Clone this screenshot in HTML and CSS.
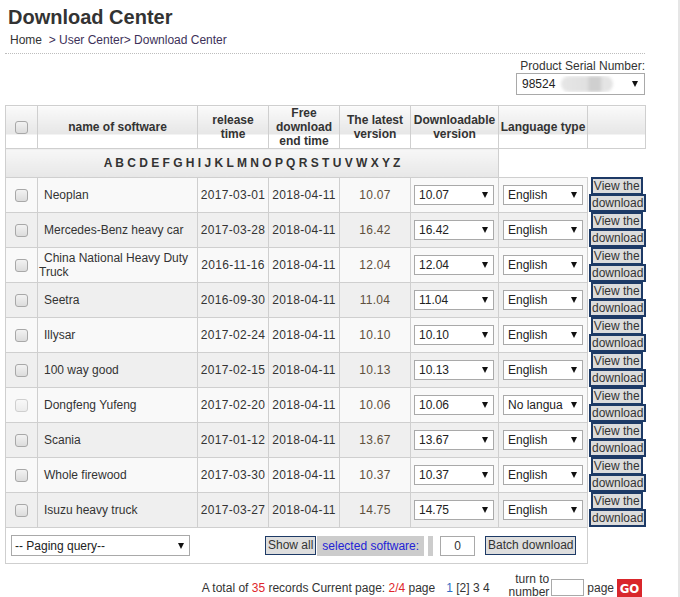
FILE: index.html
```html
<!DOCTYPE html>
<html lang="en">
<head>
<meta charset="utf-8">
<title>Download Center</title>
<link rel="stylesheet" href="styles.css">
</head>
<body>
<div class="page">
  <h1 class="title">Download Center</h1>
  <div class="crumb"><a class="home">Home</a> &nbsp;<span class="path">&gt; User Center&gt; Download Center</span></div>
  <div class="rule"></div>
  <div class="serial">
    <div class="serial-label">Product Serial Number:</div>
    <div class="sel sel-serial"><span class="val">98524<span class="blur"></span></span><i class="arr"></i></div>
  </div>

  <table class="grid">
    <colgroup>
      <col class="c1"><col class="c2"><col class="c3"><col class="c4"><col class="c5"><col class="c6"><col class="c7"><col class="c8">
    </colgroup>
    <thead>
      <tr class="head">
        <th><span class="cb"></span></th>
        <th>name of software</th>
        <th>release<br>time</th>
        <th>Free<br>download<br>end time</th>
        <th>The latest<br>version</th>
        <th>Downloadable<br>version</th>
        <th>Language type</th>
        <th></th>
      </tr>
    </thead>
    <tbody>
      <tr class="letters">
        <td colspan="6">A B C D E F G H I J K L M N O P Q R S T U V W X Y Z</td>
        <td colspan="2" class="blank"></td>
      </tr>
      <tr class="row odd">
        <td class="ck"><span class="cb"></span></td><td class="name">Neoplan</td>
        <td class="num">2017-03-01</td><td class="num">2018-04-11</td><td class="num ver">10.07</td>
        <td><div class="sel sel-ver"><span class="val">10.07</span><i class="arr"></i></div></td>
        <td><div class="sel sel-lang"><span class="val">English</span><i class="arr"></i></div></td>
        <td class="act"><a class="dl">View the download</a></td>
      </tr>
      <tr class="row even">
        <td class="ck"><span class="cb"></span></td><td class="name">Mercedes-Benz heavy car</td>
        <td class="num">2017-03-28</td><td class="num">2018-04-11</td><td class="num ver">16.42</td>
        <td><div class="sel sel-ver"><span class="val">16.42</span><i class="arr"></i></div></td>
        <td><div class="sel sel-lang"><span class="val">English</span><i class="arr"></i></div></td>
        <td class="act"><a class="dl">View the download</a></td>
      </tr>
      <tr class="row odd">
        <td class="ck"><span class="cb"></span></td><td class="name">China National Heavy Duty Truck</td>
        <td class="num">2016-11-16</td><td class="num">2018-04-11</td><td class="num ver">12.04</td>
        <td><div class="sel sel-ver"><span class="val">12.04</span><i class="arr"></i></div></td>
        <td><div class="sel sel-lang"><span class="val">English</span><i class="arr"></i></div></td>
        <td class="act"><a class="dl">View the download</a></td>
      </tr>
      <tr class="row even">
        <td class="ck"><span class="cb"></span></td><td class="name">Seetra</td>
        <td class="num">2016-09-30</td><td class="num">2018-04-11</td><td class="num ver">11.04</td>
        <td><div class="sel sel-ver"><span class="val">11.04</span><i class="arr"></i></div></td>
        <td><div class="sel sel-lang"><span class="val">English</span><i class="arr"></i></div></td>
        <td class="act"><a class="dl">View the download</a></td>
      </tr>
      <tr class="row odd">
        <td class="ck"><span class="cb"></span></td><td class="name">Illysar</td>
        <td class="num">2017-02-24</td><td class="num">2018-04-11</td><td class="num ver">10.10</td>
        <td><div class="sel sel-ver"><span class="val">10.10</span><i class="arr"></i></div></td>
        <td><div class="sel sel-lang"><span class="val">English</span><i class="arr"></i></div></td>
        <td class="act"><a class="dl">View the download</a></td>
      </tr>
      <tr class="row even">
        <td class="ck"><span class="cb"></span></td><td class="name">100 way good</td>
        <td class="num">2017-02-15</td><td class="num">2018-04-11</td><td class="num ver">10.13</td>
        <td><div class="sel sel-ver"><span class="val">10.13</span><i class="arr"></i></div></td>
        <td><div class="sel sel-lang"><span class="val">English</span><i class="arr"></i></div></td>
        <td class="act"><a class="dl">View the download</a></td>
      </tr>
      <tr class="row odd">
        <td class="ck"><span class="cb cb-off"></span></td><td class="name">Dongfeng Yufeng</td>
        <td class="num">2017-02-20</td><td class="num">2018-04-11</td><td class="num ver">10.06</td>
        <td><div class="sel sel-ver"><span class="val">10.06</span><i class="arr"></i></div></td>
        <td><div class="sel sel-lang"><span class="val">No langua</span><i class="arr"></i></div></td>
        <td class="act"><a class="dl">View the download</a></td>
      </tr>
      <tr class="row even">
        <td class="ck"><span class="cb"></span></td><td class="name">Scania</td>
        <td class="num">2017-01-12</td><td class="num">2018-04-11</td><td class="num ver">13.67</td>
        <td><div class="sel sel-ver"><span class="val">13.67</span><i class="arr"></i></div></td>
        <td><div class="sel sel-lang"><span class="val">English</span><i class="arr"></i></div></td>
        <td class="act"><a class="dl">View the download</a></td>
      </tr>
      <tr class="row odd">
        <td class="ck"><span class="cb"></span></td><td class="name">Whole firewood</td>
        <td class="num">2017-03-30</td><td class="num">2018-04-11</td><td class="num ver">10.37</td>
        <td><div class="sel sel-ver"><span class="val">10.37</span><i class="arr"></i></div></td>
        <td><div class="sel sel-lang"><span class="val">English</span><i class="arr"></i></div></td>
        <td class="act"><a class="dl">View the download</a></td>
      </tr>
      <tr class="row even">
        <td class="ck"><span class="cb"></span></td><td class="name">Isuzu heavy truck</td>
        <td class="num">2017-03-27</td><td class="num">2018-04-11</td><td class="num ver">14.75</td>
        <td><div class="sel sel-ver"><span class="val">14.75</span><i class="arr"></i></div></td>
        <td><div class="sel sel-lang"><span class="val">English</span><i class="arr"></i></div></td>
        <td class="act"><a class="dl">View the download</a></td>
      </tr>
      <tr class="foot">
        <td colspan="7">
          <div class="foot-bar">
            <div class="sel sel-page"><span class="val">-- Paging query--</span><i class="arr"></i></div>
            <span class="btn show-all">Show all</span>
            <span class="chip">selected software:</span>
            <span class="bar"></span>
            <span class="count">0</span>
            <span class="btn batch">Batch download</span>
          </div>
        </td>
        <td class="blank"></td>
      </tr>
    </tbody>
  </table>

  <div class="pager">
    <span class="total">A total of <em>35</em> records Current page: <em>2/4</em> page</span>
    <span class="pages"><a class="p1">1</a> [2] 3 4</span>
    <span class="turn">turn to<br>number</span>
    <span class="goto"></span>
    <span class="pg">page</span>
    <span class="go">GO</span>
  </div>
</div>
</body>
</html>
```
FILE: styles.css
```css
body {
  margin: 0;
  font-family: "Liberation Sans", Arial, sans-serif;
  font-size: 12px;
  color: #333;
  background: #fff;
}
.page {
  width: 680px;
  height: 597px;
  box-sizing: border-box;
  border-right: 2px solid #e6e6e6;
  padding-left: 5px;
  overflow: hidden;
}
.title {
  margin: 0;
  padding: 6px 0 0 3px;
  font-size: 20px;
  line-height: 23px;
  font-weight: bold;
  color: #333;
}
.crumb {
  margin-top: 4px;
  padding-left: 5px;
  line-height: 14px;
}
.crumb .path { color: #3d3159; }
.rule {
  width: 640px;
  margin-top: 6px;
  border-top: 1px dotted #bdbdbd;
}
.serial {
  width: 640px;
  margin-top: 5px;
  display: flex;
  flex-direction: column;
  align-items: flex-end;
}
.serial-label { line-height: 14px; }

/* fake select */
.sel {
  display: flex;
  align-items: center;
  justify-content: space-between;
  box-sizing: border-box;
  height: 20px;
  border: 1px solid #a9a9a9;
  background: #fff;
  padding: 0 5px 0 4px;
  color: #222;
  font-size: 12px;
}
.sel .val {
  overflow: hidden;
  white-space: nowrap;
  flex: 1;
  display: flex;
  align-items: center;
}
.arr {
  display: block;
  width: 0;
  height: 0;
  margin-left: 2px;
  border-style: solid;
  border-width: 6px 3.5px 0 3.5px;
  border-color: #111 transparent transparent transparent;
  flex: none;
}
.sel-serial {
  width: 129px;
  height: 22px;
  padding: 0 6px 0 5px;
}
.blur {
  display: inline-block;
  width: 52px;
  height: 16px;
  margin-left: 6px;
  border-radius: 8px;
  background: linear-gradient(to right, #e6e6e6 0, #e0e0e0 50%, #cfcfcf 55%, #cfcfcf 75%, #e4e4e4 80%);
  filter: blur(1.5px);
}

/* table */
.grid {
  margin-top: 10px;
  width: 640px;
  table-layout: fixed;
  border-collapse: collapse;
}
.c1 { width: 32px; }
.c2 { width: 160px; }
.c3 { width: 71px; }
.c4 { width: 71px; }
.c5 { width: 71px; }
.c6 { width: 88px; }
.c7 { width: 89px; }
.c8 { width: 58px; }
.grid th, .grid td {
  border: 1px solid #cfcfcf;
  padding: 0;
  text-align: center;
  vertical-align: middle;
}
.head th {
  height: 42px;
  font-weight: bold;
  font-size: 12px;
  line-height: 14px;
  color: #333;
  background: linear-gradient(to bottom, #fafafa 0, #e6e6e6 28px, #fff 28px);
}
.letters td {
  height: 28px;
  font-weight: bold;
  color: #333;
  background: linear-gradient(to bottom, #f7f7f7, #e7e7e7);
}
.grid td.blank {
  border: none;
  background: #fff;
}
.row td { height: 34px; }
.row.odd td { background: #f9f9f9; }
.row.even td { background: #efefef; }
.grid .row td.act {
  border: none;
  background: #fff;
  padding: 0 1px 0 1px;
  line-height: 17px;
}
.cb {
  display: inline-block;
  vertical-align: middle;
  width: 11px;
  height: 11px;
  border: 1px solid #a8a8a8;
  border-radius: 3px;
  background: linear-gradient(to bottom, #f2f2f2, #dcdcdc);
}
.cb-off {
  border-color: #cfcfcf;
  background: linear-gradient(to bottom, #f8f8f8, #ececec);
}
.name {
  text-align: left !important;
  padding-left: 1px !important;
  text-indent: 5px;
  line-height: 14px;
}
.num { letter-spacing: 0.3px; }
.ver { color: #5e4f3c; }
.sel-ver { width: 80px; margin-left: 3px; }
.sel-lang { width: 80px; margin-left: 4px; }
.dl {
  display: inline;
  border: 2px solid #1d3a66;
  background: #dcdcdc;
  color: #333;
  padding: 0 1px;
  -webkit-box-decoration-break: clone;
  box-decoration-break: clone;
}

/* footer */
.foot td {
  height: 35px;
  background: #fff;
}
.foot-bar {
  display: flex;
  align-items: center;
  padding-left: 5px;
}
.sel-page {
  width: 179px;
  height: 21px;
  padding: 0 5px 0 3px;
}
.btn {
  display: inline-block;
  border: 1px solid #1d3a66;
  background: #dedede;
  color: #333;
  line-height: 17px;
  padding: 0 2px;
  font-size: 12px;
}
.show-all { margin-left: 75px; }
.chip {
  background: #cccccc;
  color: #2323d6;
  line-height: 20px;
  padding: 0 5px;
  margin-left: 1px;
}
.bar {
  width: 5px;
  height: 20px;
  background: #cccccc;
  margin-left: 4px;
}
.count {
  width: 33px;
  height: 18px;
  line-height: 18px;
  border: 1px solid #a9a9a9;
  text-align: center;
  margin-left: 7px;
  background: #fff;
}
.batch { margin-left: 10px; }

/* pager */
.pager {
  width: 637px;
  margin-top: 9px;
  display: flex;
  justify-content: flex-end;
  align-items: flex-start;
}
.pager em { font-style: normal; color: #e0262b; }
.total { line-height: 14px; margin-top: 8px; }
.pages { margin-left: 11px; line-height: 14px; margin-top: 8px; }
.p1 { color: #2e6cc3; }
.turn {
  margin-left: 19px;
  text-align: right;
  line-height: 13px;
}
.goto {
  width: 31px;
  height: 15px;
  border: 1px solid #a9a9a9;
  margin-left: 2px;
  margin-top: 6px;
}
.pg { margin-left: 3px; margin-top: 8px; line-height: 14px; }
.go {
  margin-left: 3px;
  margin-top: 6px;
  width: 25px;
  height: 19px;
  line-height: 19px;
  background: #d9262b;
  color: #fff;
  font-weight: bold;
  font-family: "Liberation Sans Narrow", "DejaVu Sans Condensed", sans-serif;
  font-size: 13px;
  text-align: center;
}
```
